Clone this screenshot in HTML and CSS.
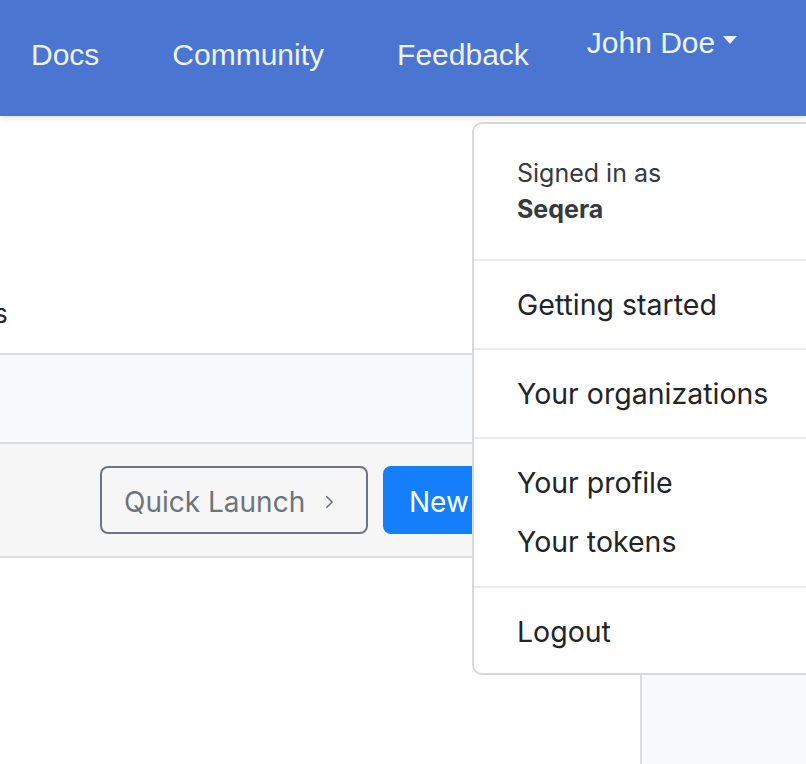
FILE: index.html
```html
<!DOCTYPE html>
<html lang="en">
<head>
<meta charset="utf-8">
<title>Dashboard</title>
<link rel="stylesheet" href="styles.css">
</head>
<body>
<header class="navbar">
  <nav class="nav">
    <a class="nav-link nav-docs" href="#">Docs</a>
    <a class="nav-link nav-community" href="#">Community</a>
    <a class="nav-link nav-feedback" href="#">Feedback</a>
    <a class="nav-link nav-user" href="#">John Doe<span class="caret"></span></a>
  </nav>
</header>
<main class="page">
  <section class="title-row"><span class="title-tail">s</span></section>
  <section class="filter-row"></section>
  <section class="action-row">
    <button class="btn btn-outline">Quick Launch<svg class="chev" viewBox="0 0 10 16" width="9" height="14"><path d="M2 2 L8 8 L2 14" fill="none" stroke="#6c757d" stroke-width="2" stroke-linecap="round" stroke-linejoin="round"/></svg></button>
    <button class="btn btn-primary">New pipeline</button>
  </section>
  <section class="lower">
    <div class="lower-main"></div>
    <aside class="lower-side"></aside>
  </section>
</main>
<div class="dropdown-menu">
  <div class="dd-header">
    <div class="dd-small">Signed in as</div>
    <div class="dd-name">Seqera</div>
  </div>
  <div class="dd-divider"></div>
  <a class="dd-item" href="#">Getting started</a>
  <div class="dd-divider"></div>
  <a class="dd-item" href="#">Your organizations</a>
  <div class="dd-divider"></div>
  <div class="dd-group">
    <a class="dd-item dd-tight" href="#">Your profile</a>
    <a class="dd-item dd-tight" href="#">Your tokens</a>
  </div>
  <div class="dd-divider"></div>
  <a class="dd-item" href="#">Logout</a>
</div>
</body>
</html>
```
FILE: styles.css
```css
html, body {
  margin: 0;
  padding: 0;
  height: 100%;
  overflow: hidden;
}
body {
  position: relative;
  font-family: Inter, "Noto Sans", sans-serif;
  color: #212529;
  background: #fff;
}
a { text-decoration: none; color: inherit; }

.navbar {
  height: 116px;
  background: #4a76d1;
  box-shadow: 0 2px 6px rgba(0,0,0,0.12);
  position: relative;
  z-index: 1;
}
.nav {
  display: flex;
  align-items: flex-start;
  height: 100%;
  padding-left: 31px;
}
.nav-link {
  font-family: "Liberation Sans", Arial, sans-serif;
  font-size: 30px;
  color: #eef2fb;
  line-height: 1;
  margin-top: 40px;
  white-space: nowrap;
}
.nav-community { margin-left: 73px; }
.nav-feedback { margin-left: 73px; }
.nav-user {
  margin-left: 58px;
  margin-top: 28px;
  display: flex;
  align-items: flex-start;
}
.caret {
  display: inline-block;
  width: 0;
  height: 0;
  border-left: 7px solid transparent;
  border-right: 7px solid transparent;
  border-top: 8px solid #eef2fb;
  margin-left: 8px;
  margin-top: 8px;
}

.page {
  display: flex;
  flex-direction: column;
}
.title-row {
  height: 237px;
  border-bottom: 2px solid #dcdcdc;
  display: flex;
  align-items: flex-end;
}
.title-tail {
  font-size: 26px;
  color: #212529;
  margin-left: -6px;
  margin-bottom: 24px;
}
.filter-row {
  height: 87px;
  background: #f8f9fa;
  border-bottom: 2px solid #dcdcdc;
}
.action-row {
  height: 112px;
  background: #f6f6f6;
  border-bottom: 2px solid #dcdcdc;
  display: flex;
  align-items: center;
  padding-left: 100px;
  gap: 15px;
}
.btn {
  font-family: Inter, "Noto Sans", sans-serif;
  font-size: 28px;
  height: 68px;
  border-radius: 8px;
  padding: 0 22px;
  padding-top: 3px;
  display: flex;
  align-items: center;
  white-space: nowrap;
  flex-shrink: 0;
}
.btn-outline {
  background: transparent;
  border: 2px solid #6c757d;
  color: #6c757d;
  width: 268px;
}
.chev { margin-left: 20px; }
.btn-primary {
  background: #157ffb;
  border: 2px solid #157ffb;
  color: #fff;
  padding-left: 24px;
}
.lower {
  display: flex;
  height: 206px;
}
.lower-main {
  width: 640px;
  border-right: 2px solid #dcdcdc;
}
.lower-side {
  flex: 1;
  background: #f8f9fa;
}

.dropdown-menu {
  position: absolute;
  left: 472px;
  top: 122px;
  width: 360px;
  height: 549px;
  background: #fff;
  border: 2px solid #d9d9d9;
  border-radius: 10px;
  z-index: 2;
  display: flex;
  flex-direction: column;
}
.dd-header {
  padding: 31px 0 0 43px;
  height: 104px;
  flex-shrink: 0;
}
.dd-small {
  font-size: 25px;
  line-height: 36px;
  color: #343a40;
}
.dd-name {
  font-size: 25px;
  line-height: 36px;
  font-weight: 700;
  color: #343a40;
}
.dd-divider {
  height: 2px;
  background: #e9ecef;
  flex-shrink: 0;
}
.dd-item {
  font-size: 28.5px;
  line-height: 87px;
  padding-left: 43px;
  color: #212529;
}
.dd-group {
  padding: 14px 0 15px;
  display: flex;
  flex-direction: column;
}
.dd-tight { line-height: 59px; }
```
